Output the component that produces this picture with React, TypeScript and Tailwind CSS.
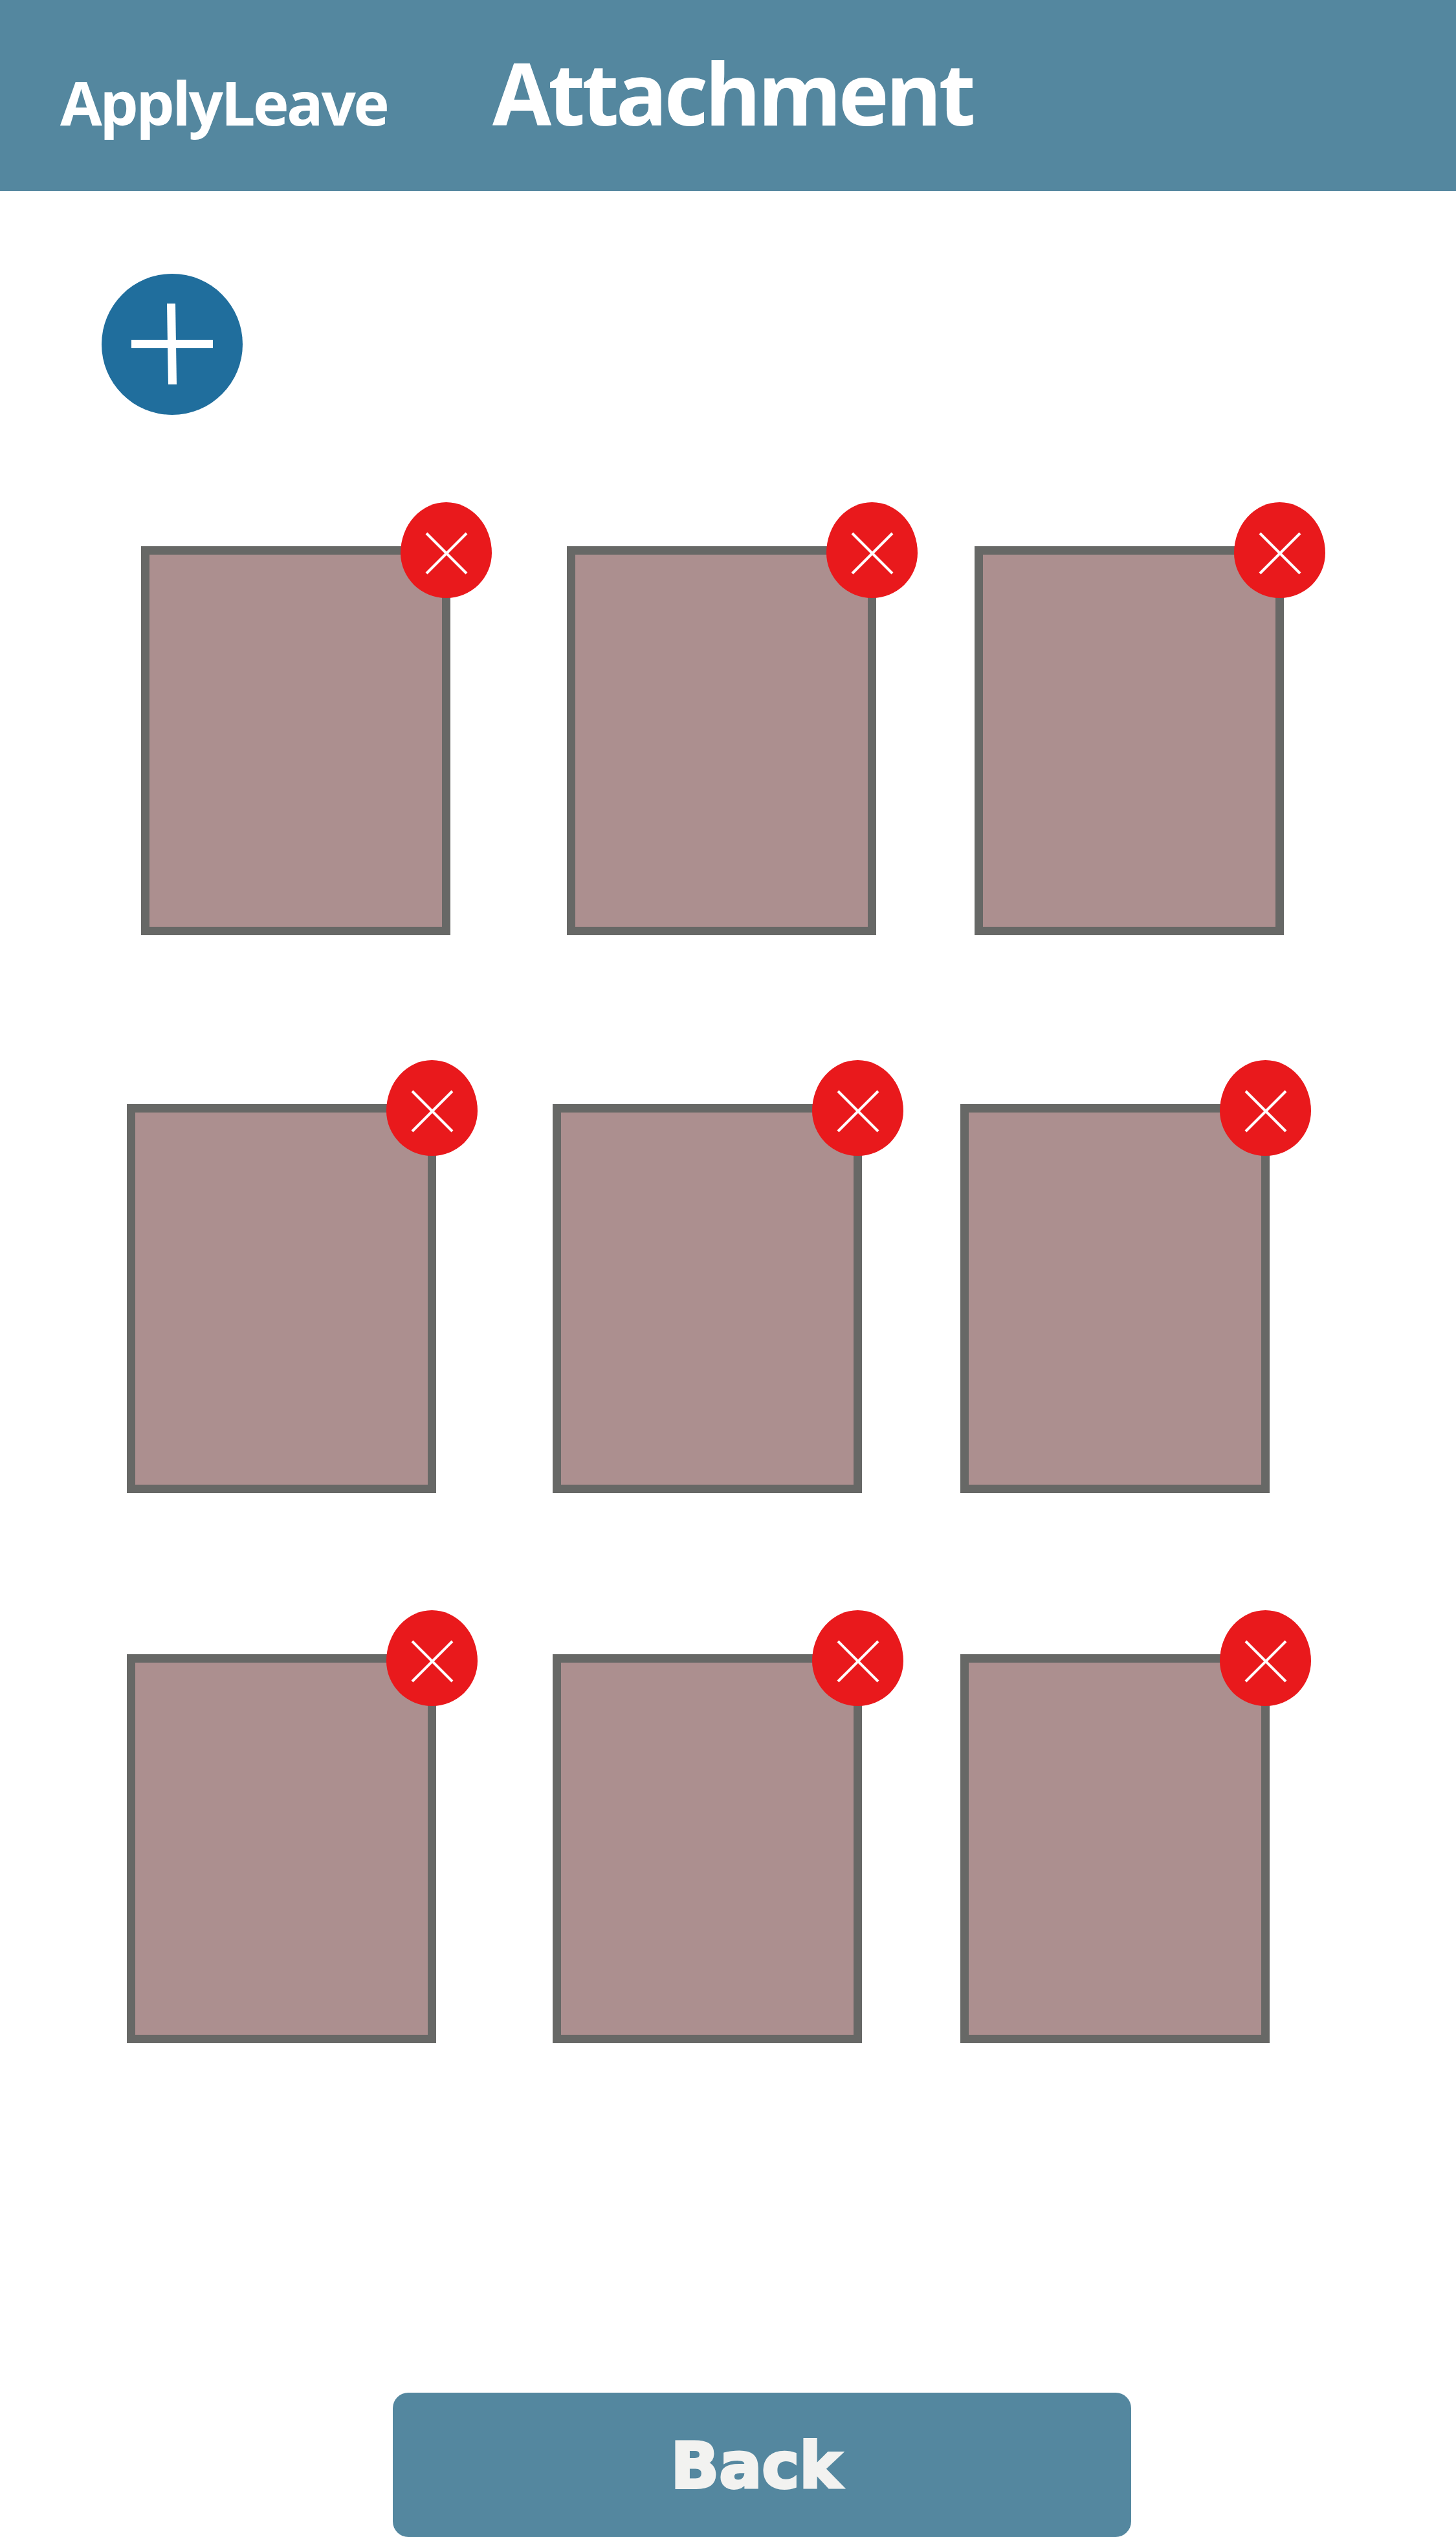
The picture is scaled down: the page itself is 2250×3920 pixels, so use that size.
import React from 'react';

const CloseBadge = () => (
  <div className="absolute right-[-77px] top-[-81px] flex h-[148px] w-[141px] items-center justify-center rounded-[50%/53%_53%_47%_47%] bg-[#e9191c] pt-[9px]">
    <svg width="66" height="66" viewBox="0 0 66 66" fill="none" stroke="#ffffff" strokeWidth="4">
      <path d="M2 2 L64 64" />
      <path d="M64 2 L2 64" />
    </svg>
  </div>
);

const Tile = () => (
  <div className="relative h-[601px] w-[478px] shrink-0 border-[13px] border-[#676866] bg-[#ac8f8f]">
    <CloseBadge />
  </div>
);

const TileRow = ({ className }: { className: string }) => (
  <div className={`flex gap-[152px] ${className}`}>
    <div className="mr-[28px]">
      <Tile />
    </div>
    <Tile />
    <Tile />
  </div>
);

const App: React.FC = () => {
  return (
    <div className="flex h-[3920px] w-[2250px] flex-col overflow-hidden bg-white font-['Open_Sans',sans-serif]">
      <div className="flex h-[295px] shrink-0 items-baseline bg-[#54879f] pl-[93px] pt-[77px] leading-none text-white">
        <span className="w-[668px] text-[94px] font-bold tracking-[-3.5px]">ApplyLeave</span>
        <span className="text-[132px] font-bold tracking-[-5px]">Attachment</span>
      </div>

      <div className="ml-[157px] mt-[128px] flex h-[218px] w-[218px] shrink-0 items-center justify-center rounded-full bg-[#206e9d]">
        <svg width="126" height="126" viewBox="0 0 126 126" fill="#ffffff">
          <rect x="0" y="56" width="126" height="13" />
          <polygon points="55,0 68,0 70,125 57,125" />
        </svg>
      </div>

      <TileRow className="ml-[218px] mt-[203px]" />
      <TileRow className="ml-[196px] mt-[261px]" />
      <TileRow className="ml-[196px] mt-[249px]" />

      <button className="ml-[607px] mt-auto flex h-[223px] w-[1141px] shrink-0 items-center justify-center rounded-[24px] bg-[#54879f] pr-[18px] pt-[3px] font-['DejaVu_Sans',sans-serif] text-[98px] font-bold leading-none text-[#f2f2f0] [-webkit-text-stroke:4px_#f2f2f0]">
        Back
      </button>
    </div>
  );
};

export default App;
